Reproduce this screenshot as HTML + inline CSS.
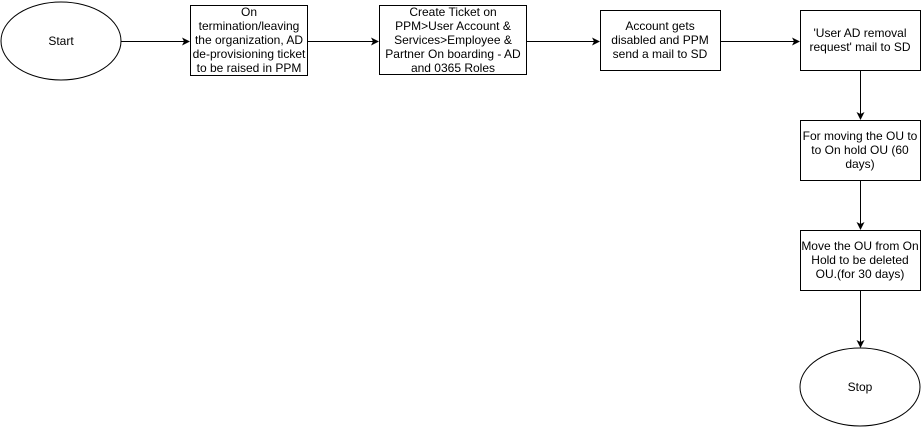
<!DOCTYPE html>
<html><head><style>body{margin:0;background:#fff}svg{display:block}text{font-family:"Liberation Sans",Arial,sans-serif;font-size:12px;fill:#000}</style></head>
<body>
<svg width="921" height="428" viewBox="0 0 921 428">
<defs><marker id="a" markerWidth="8" markerHeight="8" refX="7" refY="4" orient="auto" markerUnits="userSpaceOnUse"><path d="M0,0 L8,4 L0,8 L2,4 Z" fill="#000"/></marker></defs>
<g fill="#fff" stroke="#000" stroke-width="1">
<ellipse cx="61" cy="41" rx="60" ry="39"/>
<rect x="190.5" y="5.5" width="117" height="70"/>
<rect x="379.5" y="5.5" width="147" height="69"/>
<rect x="600.5" y="10.5" width="120" height="60"/>
<rect x="800.5" y="10.5" width="120" height="60"/>
<rect x="800.5" y="120.5" width="120" height="60"/>
<rect x="800.5" y="230.5" width="120" height="60"/>
<ellipse cx="860" cy="387" rx="60" ry="39"/>
</g>
<g stroke="#000" stroke-width="1" fill="none">
<path d="M121 41.5 H189" marker-end="url(#a)"/>
<path d="M308 41.5 H378" marker-end="url(#a)"/>
<path d="M527 41.5 H599" marker-end="url(#a)"/>
<path d="M721 41.5 H799" marker-end="url(#a)"/>
<path d="M860.5 71 V119" marker-end="url(#a)"/>
<path d="M860.5 181 V229" marker-end="url(#a)"/>
<path d="M860.5 291 V347" marker-end="url(#a)"/>
</g>
<g text-anchor="middle">
<text x="61" y="45">Start</text>
<text x="249" y="16">On</text>
<text x="249" y="30">termination/leaving</text>
<text x="249" y="44">the organization, AD</text>
<text x="249" y="58">de-provisioning ticket</text>
<text x="249" y="72">to be raised in PPM</text>
<text x="453" y="16">Create Ticket on</text>
<text x="453" y="30">PPM&gt;User Account &amp;</text>
<text x="453" y="44">Services&gt;Employee &amp;</text>
<text x="453" y="58">Partner On boarding - AD</text>
<text x="453" y="72">and 0365 Roles</text>
<text x="660" y="30">Account gets</text>
<text x="660" y="44">disabled and PPM</text>
<text x="660" y="58">send a mail to SD</text>
<text x="860" y="37">'User AD removal</text>
<text x="860" y="51">request' mail to SD</text>
<text x="860" y="140">For moving the OU to</text>
<text x="860" y="154">to On hold OU (60</text>
<text x="860" y="168">days)</text>
<text x="860" y="250">Move the OU from On</text>
<text x="860" y="264">Hold to be deleted</text>
<text x="860" y="278">OU.(for 30 days)</text>
<text x="860" y="391">Stop</text>
</g>
</svg>
</body></html>
